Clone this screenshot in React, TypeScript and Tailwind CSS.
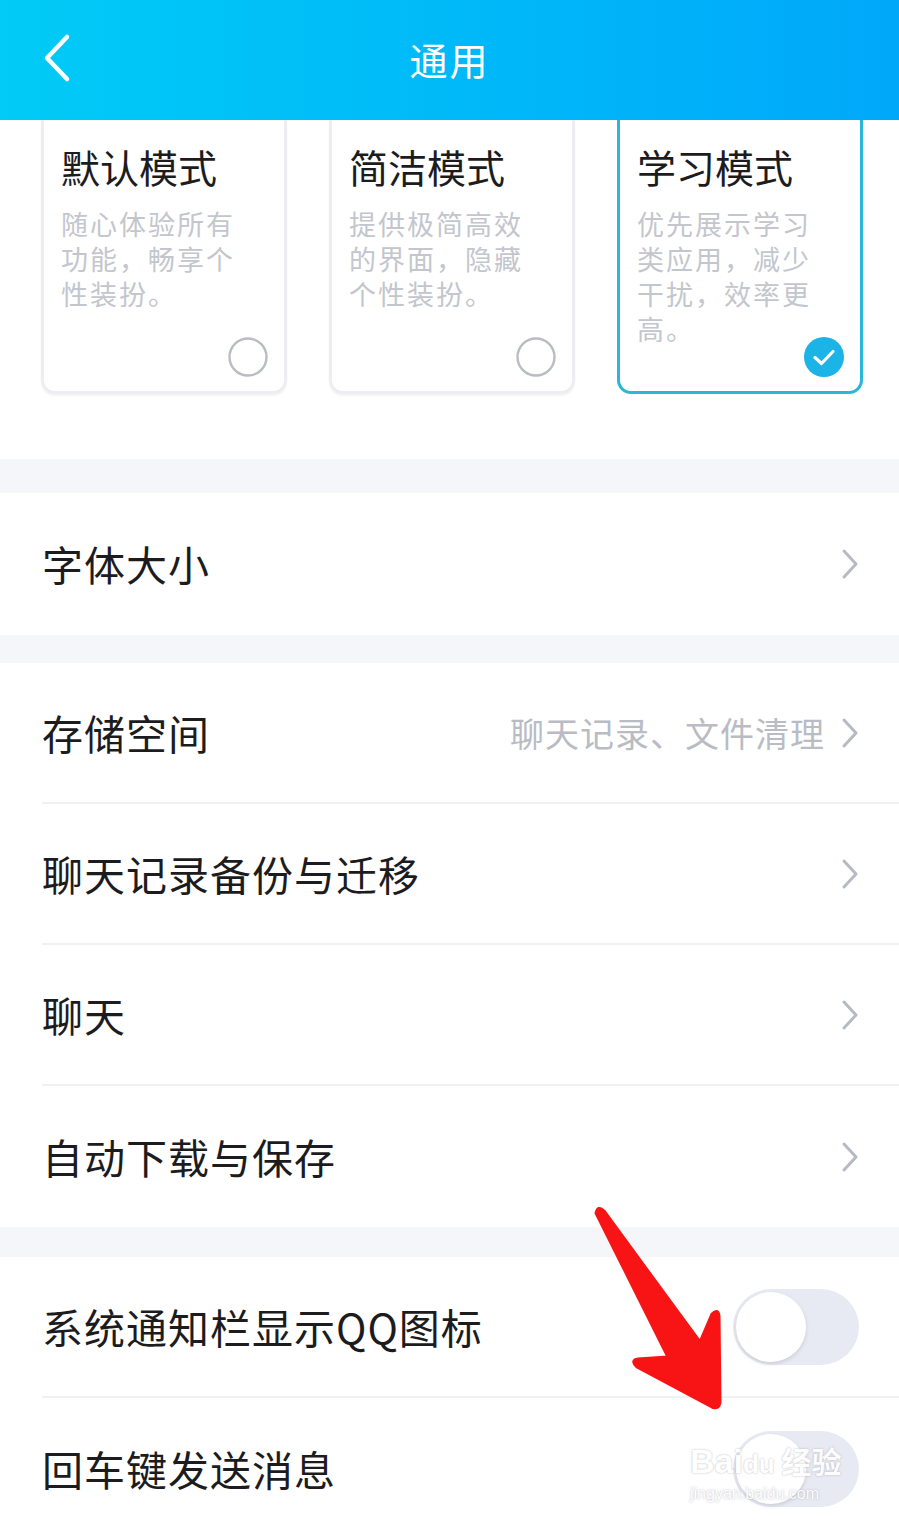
import { ReactNode } from "react";

const font = { fontFamily: '"Noto Sans CJK SC", "Noto Sans", sans-serif' };

function Chevron() {
  return (
    <svg width="18" height="32" viewBox="0 0 18 32" className="shrink-0">
      <path d="M3 3 L15 16 L3 29" fill="none" stroke="#b6bac2" strokeWidth="3" strokeLinecap="round" strokeLinejoin="round" />
    </svg>
  );
}

function Toggle() {
  return (
    <div className="w-[126px] h-[76px] rounded-full bg-[#e8eaf3] flex items-center px-[3px]">
      <div className="w-[70px] h-[70px] rounded-full bg-white shadow-[0_2px_4px_rgba(0,0,0,0.12)]" />
    </div>
  );
}

interface ModeCardProps {
  title: string;
  lines: string[];
  selected?: boolean;
}

function ModeCard({ title, lines, selected }: ModeCardProps) {
  return (
    <div
      className={
        selected
          ? "w-[246px] h-[286px] -mt-[12px] rounded-[14px] border-[3px] border-[#2bb6d8] bg-white flex flex-col pl-[17px] pr-[15px] pt-[32px]"
          : "w-[246px] h-[286px] -mt-[12px] rounded-[14px] border-[3px] border-[#eceef3] bg-white shadow-[0_2px_2px_rgba(0,0,0,0.05)] flex flex-col pl-[17px] pr-[15px] pt-[32px]"
      }
    >
      <div className="text-[39px] leading-[46px] text-[#1c1c1e]">{title}</div>
      <div className="mt-[17px] h-[140px] text-[27px] leading-[35px] text-[#c3c6cd] tracking-[2px]">
        {lines.map((l) => (
          <div key={l} className="h-[35px]">{l}</div>
        ))}
      </div>
      <div className="mt-[-10px] flex justify-end">
        {selected ? (
          <svg width="42" height="42" viewBox="0 0 42 42">
            <circle cx="21" cy="21" r="20" fill="#1cb3e6" />
            <path d="M12 21.5 L18.5 27.5 L30 15.5" fill="none" stroke="#fff" strokeWidth="3.2" strokeLinecap="round" strokeLinejoin="round" />
          </svg>
        ) : (
          <svg width="42" height="42" viewBox="0 0 42 42">
            <circle cx="21" cy="21" r="18.5" fill="none" stroke="#b9bcc3" strokeWidth="2.4" />
          </svg>
        )}
      </div>
    </div>
  );
}

function Row({ label, right, divider, h, children }: { label: string; right?: string; divider?: boolean; h: string; children?: ReactNode }) {
  return (
    <div className="pl-[42px]">
      <div className={divider ? `${h} flex items-center pr-[40px] border-b-2 border-[#eff1f5]` : `${h} flex items-center pr-[40px]`}>
        <div className="flex-1 text-[41px] text-[#1c1c1e] tracking-[1px]">{label}</div>
        {right && <div className="text-[34px] text-[#b9bcc3] tracking-[1px] mr-[16px]">{right}</div>}
        {children ?? <Chevron />}
      </div>
    </div>
  );
}

export default function App() {
  return (
    <div className="relative w-[899px] h-[1536px] overflow-hidden bg-white" style={font}>
      <div className="h-[120px] bg-gradient-to-r from-[#02cbf6] to-[#01a8fa] flex items-center relative z-10">
        <svg width="40" height="60" viewBox="0 0 40 60" className="ml-[38px] mt-[-4px]">
          <path d="M29 9 L9 30 L29 51" fill="none" stroke="#fff" strokeWidth="4.5" strokeLinecap="round" strokeLinejoin="round" />
        </svg>
        <div className="absolute left-0 right-0 top-[34px] leading-[50px] text-center text-white text-[38px] tracking-[2px] pointer-events-none">通用</div>
      </div>

      <div className="h-[339px] flex gap-[42px] pl-[41px] overflow-hidden">
        <ModeCard title="默认模式" lines={["随心体验所有", "功能，畅享个", "性装扮。"]} />
        <ModeCard title="简洁模式" lines={["提供极简高效", "的界面，隐藏", "个性装扮。"]} />
        <ModeCard title="学习模式" lines={["优先展示学习", "类应用，减少", "干扰，效率更", "高。"]} selected />
      </div>

      <div className="h-[34px] bg-[#f5f6fa]" />
      <Row label="字体大小" h="h-[142px]" />
      <div className="h-[28px] bg-[#f5f6fa]" />
      <Row label="存储空间" right="聊天记录、文件清理" divider h="h-[141px]" />
      <Row label="聊天记录备份与迁移" divider h="h-[141px]" />
      <Row label="聊天" divider h="h-[141px]" />
      <Row label="自动下载与保存" h="h-[141px]" />
      <div className="h-[30px] bg-[#f5f6fa]" />
      <Row label="系统通知栏显示QQ图标" divider h="h-[141px]">
        <Toggle />
      </Row>
      <Row label="回车键发送消息" h="h-[141px]">
        <Toggle />
      </Row>

      {/* red annotation arrow */}
      <svg className="absolute left-0 top-0 pointer-events-none" width="899" height="1536" viewBox="0 0 899 1536">
        <path
          d="M596 1213 Q598 1205 604 1211 L700 1342 L712 1314 Q718 1308 719 1316 L720 1402 Q719 1410 712 1407 L637 1367 Q630 1360 638 1359 L668 1357 Z"
          fill="#f81414"
          stroke="#f81414"
          strokeWidth="3"
          strokeLinejoin="round"
        />
      </svg>

      {/* watermark */}
      <div className="absolute left-[690px] top-[1440px] pointer-events-none text-white opacity-90 [text-shadow:0_0_2px_rgba(120,120,140,0.6)]">
        <div className="text-[34px] leading-[40px] font-bold" style={{ fontFamily: '"Liberation Sans", sans-serif' }}>
          Bai<span className="text-[26px]">du</span>
          <span className="text-[30px]" style={font}> 经验</span>
        </div>
        <div className="text-[16px] leading-[20px]" style={{ fontFamily: '"Liberation Sans", sans-serif' }}>jingyan.baidu.com</div>
      </div>
    </div>
  );
}
